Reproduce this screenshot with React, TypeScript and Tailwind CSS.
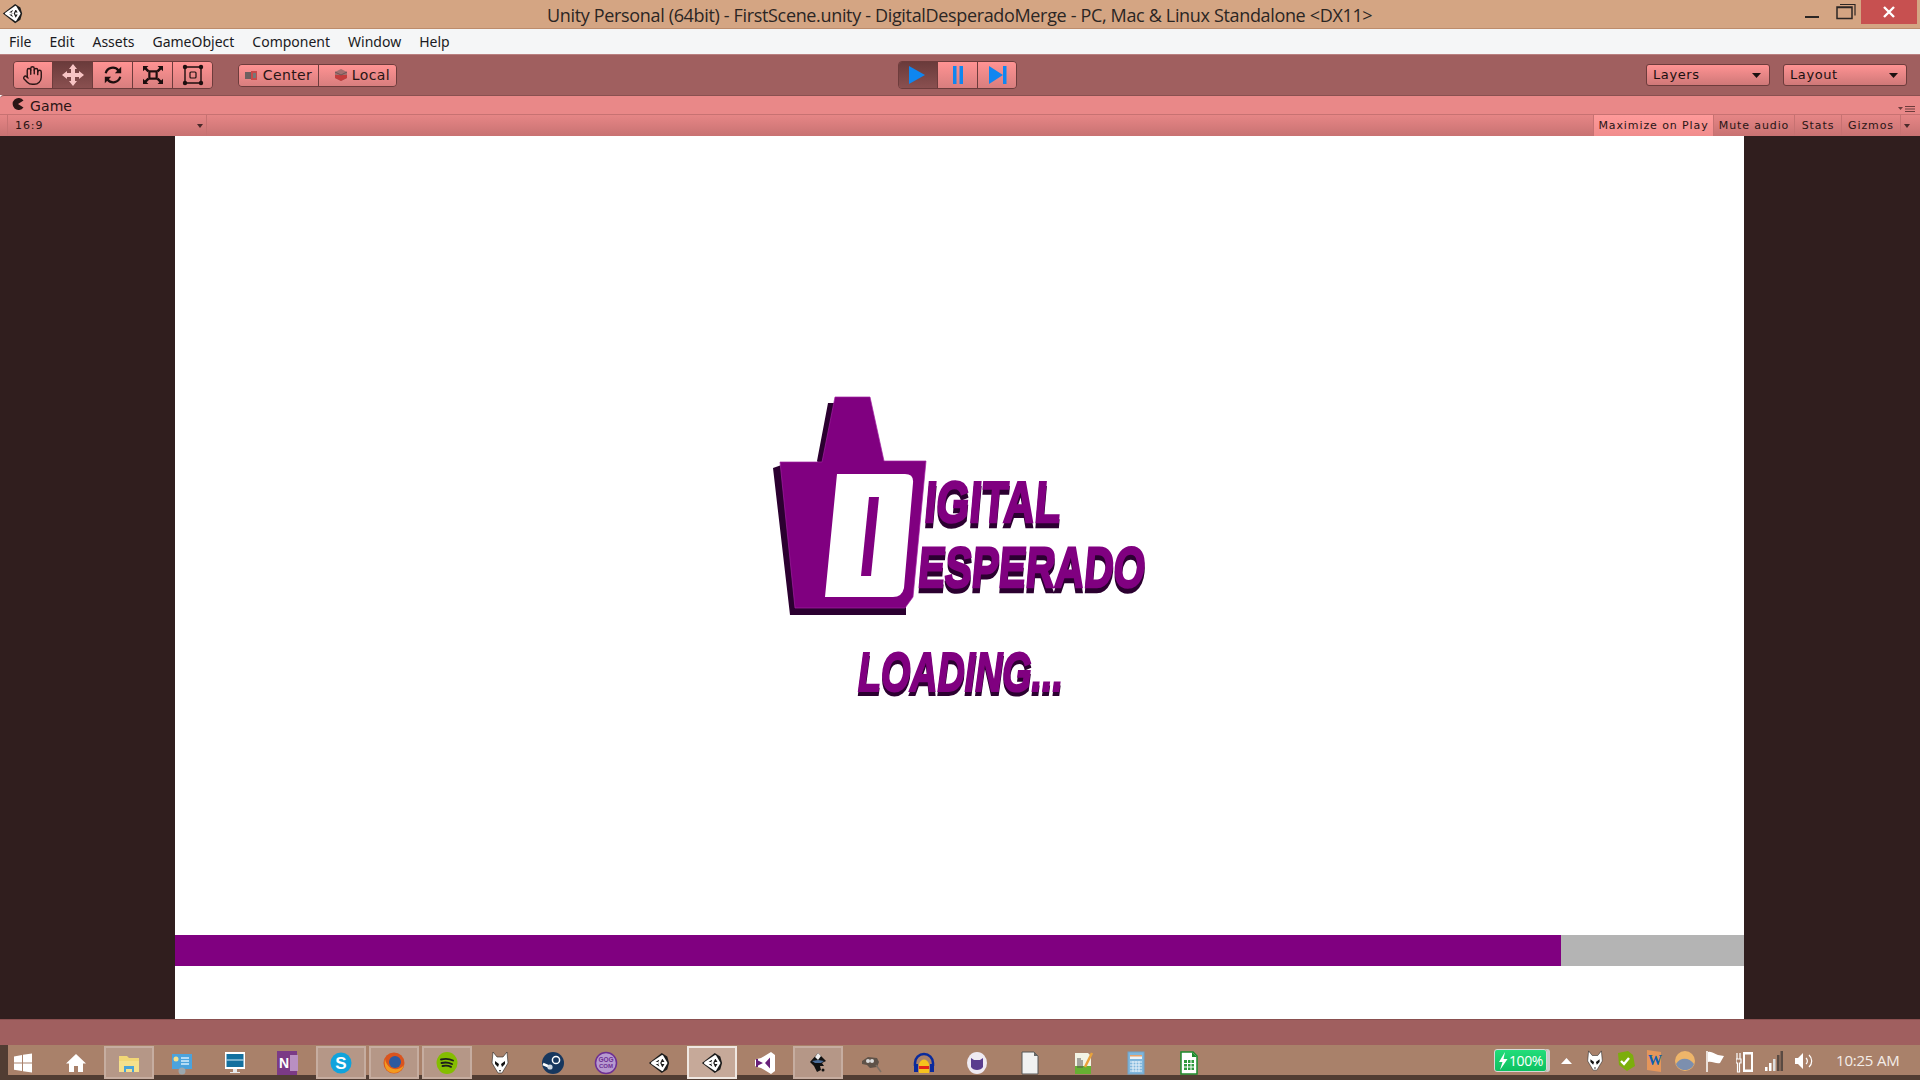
import React from "react";
import { Hand } from "lucide-react";

const Unity = ({ s = 22 }: { s?: number }) => (
  <svg width={s} height={s} viewBox="0 0 24 24">
    <path d="M1 12 15 1 21 5 23 12 21 19 15 23Z" fill="#1c1c1c" />
    <path d="M4.500 12 15.500 4.500 20 12 15.500 19.500ZM4.500 12H11M15.500 4.500 12 12M15.500 19.500 12 12M20 12H15" fill="none" stroke="#fff" strokeWidth="2.400" strokeLinejoin="round" />
  </svg>
);

const Seg = ({ active, w = "w-[40px]", children }: { active?: boolean; w?: string; children: React.ReactNode }) => (
  <div className={`${w} shrink-0 h-full flex items-center justify-center border-r last:border-r-0 border-[#6d3c3c] ${active ? "bg-gradient-to-b from-[#6a3b3b] to-[#8a5050]" : "bg-gradient-to-b from-[#ff9393] to-[#d87e7e]"}`}>
    {children}
  </div>
);

const Drop = ({ label }: { label: string }) => (
  <div className="w-[124px] h-[22px] rounded-[3px] border border-[#6d3c3c] bg-gradient-to-b from-[#ff9393] to-[#cf7878] flex items-center justify-between pl-[6px] pr-[8px] text-[13px] tracking-[0.6px] text-[#1c1010]">
    <span>{label}</span>
    <svg width="9" height="5" viewBox="0 0 9 5"><path d="M0 0h9L4.500 5Z" fill="#1c1010" /></svg>
  </div>
);

const GBtn = ({ w, active, children }: { w: string; active?: boolean; children: React.ReactNode }) => (
  <div className={`${w} h-full border-l border-[#c77272] pt-[1px] flex items-center justify-center ${active ? "bg-gradient-to-b from-[#ff9a9a] to-[#f08c8c]" : ""}`}>{children}</div>
);

const Tile = ({ on, strong, children }: { on?: boolean; strong?: boolean; children?: React.ReactNode }) => (
  <div className={`w-[50px] h-[33px] shrink-0 flex items-center justify-center border-2 ${strong ? "border-[#f0e8e2] bg-[#c6a999]" : on ? "border-[#c6ada0] bg-[#b59787]" : "border-transparent"}`}>
    {children}
  </div>
);

const I = ({ children, w = 24, h = 24 }: { children: React.ReactNode; w?: number; h?: number }) => (
  <svg width={w} height={h} viewBox={`0 0 ${w} ${h}`}>{children}</svg>
);

const Fox = ({ s = 24 }: { s?: number }) => (
  <svg width={s} height={s} viewBox="0 0 24 24">
    <path d="M5 1 9 6h6l4-5 1 11-6 10h-4L4 12Z" fill="#fff" stroke="#222" strokeWidth=".6" />
    <path d="M7 10l4 3-1 3-3-3ZM17 10l-4 3 1 3 3-3Z" fill="#111" />
    <path d="M11 19h2l-1 2Z" fill="#111" />
  </svg>
);

const taskIcons: React.ReactNode[] = [
  <I key="a"><path d="M3 5.500 11 4v7.500H3ZM12 3.800 21 2.500v9h-9ZM3 12.500h8V20l-8-1.200ZM12 12.500h9v9l-9-1.300Z" fill="#fff" /></I>,
  <I key="b"><path d="M12 3 22 12.500h-3V21h-5v-6h-4v6H5v-8.500H2Z" fill="#fff" /></I>,
  <I key="c"><path d="M2 5h8l2 2h10v6H2Z" fill="#f2d776" /><path d="M2 10h20v11H2Z" fill="#f5e08c" /><path d="M7 15h10v6h-2v-3H9v3H7Z" fill="#4aa3d8" /></I>,
  <I key="d"><rect x="2" y="3" width="20" height="15" fill="#4ba3dc" /><circle cx="6" cy="8" r="2.500" fill="#f6e08a" /><path d="M11 7h8M11 10h8M11 13h8" stroke="#d8eefa" strokeWidth="1.600" /><circle cx="12" cy="20" r="3.500" fill="#9aa7ae" /></I>,
  <I key="e"><rect x="2" y="1" width="20" height="17" fill="#fff" /><rect x="3.500" y="3" width="17" height="13" fill="#13709f" /><path d="M3.500 9h17" stroke="#d8eefa" /><path d="M10 18h4v3h3v1H7v-1h3Z" fill="#e7eaec" /></I>,
  <I key="f"><rect x="1" y="0" width="20" height="24" fill="#7b3a86" /><rect x="14" y="4" width="8" height="16" fill="#b98fc2" /><text x="3" y="17" fontSize="14" fontWeight="700" fill="#fff" fontFamily="Liberation Sans">N</text></I>,
  <I key="g"><circle cx="12" cy="12" r="10.500" fill="#10a3dc" /><text x="12" y="18" fontSize="17" fontWeight="700" fill="#fff" textAnchor="middle" fontFamily="Liberation Sans">S</text></I>,
  <I key="h"><circle cx="12" cy="12" r="10.500" fill="#d9541e" /><circle cx="13" cy="11" r="6" fill="#2c5aa0" /><path d="M3 8c2 10 12 14 19 6-2 8-11 10-16 6C3 18 2 12 3 8Z" fill="#f39a1e" /></I>,
  <I key="i"><ellipse cx="12" cy="12" rx="10.500" ry="11" fill="#84bd00" /><path d="M6 8.500c4-1 8-1 12 1M6.500 12c3.500-1 7-.7 10.500 1M7.500 15c3-.7 6-.5 8.500 .8" fill="none" stroke="#1d1d1d" strokeWidth="1.900" strokeLinecap="round" /></I>,
  <Fox key="j" />,
  <I key="k"><circle cx="12" cy="12" r="11" fill="#17375e" /><circle cx="15" cy="9" r="3.600" fill="none" stroke="#fff" strokeWidth="1.500" /><path d="M2 13 9 16" stroke="#fff" strokeWidth="2.500" /><circle cx="9" cy="16" r="2.600" fill="#cfd8e2" /></I>,
  <I key="l"><circle cx="12" cy="12" r="10.500" fill="#b79ad0" stroke="#6d2f93" strokeWidth="1.500" /><text x="12" y="11" fontSize="6.500" fontWeight="700" fill="#6d2f93" textAnchor="middle" fontFamily="Liberation Sans">GOG</text><text x="12" y="17" fontSize="6" fontWeight="700" fill="#6d2f93" textAnchor="middle" fontFamily="Liberation Sans">COM</text></I>,
  <Unity key="m" />,
  <Unity key="n" />,
  <I key="o"><path d="M4 8 8 7 18 1 22 4V20L18 23 8 17 4 16 2 15V9Z" fill="#fff" /><path d="M5 9.500 10 12 5 14.500ZM17 6.500V17.500L12 12Z" fill="#68217a" /><path d="M4 8v8" stroke="#68217a" strokeWidth="2" /></I>,
  <I key="p"><path d="M12 2 20 10 16 12 18 15H14L15 19 11 21 8 15 4 11Z" fill="#111" /><path d="M12 2 15 5 12 9 9 6Z" fill="#eee" /><path d="M6 10 12 9 18 10 15 12H9Z" fill="#4c6d98" /><circle cx="17" cy="19" r="1.500" fill="#111" /></I>,
  <I key="q"><path d="M3 10 9 6l9 1 2 4-2 5-7 1-3-3-5-1Z" fill="#5f5248" /><circle cx="9" cy="10" r="2" fill="#ddd" /><circle cx="13" cy="10" r="2" fill="#ddd" /><path d="M17 14 22 21" stroke="#7c6f64" strokeWidth="1.500" /></I>,
  <I key="r"><path d="M3 15V12a9 9 0 0 1 18 0v3" fill="none" stroke="#0a2a9c" strokeWidth="2.500" /><rect x="2" y="13" width="4" height="8" fill="#0a2a9c" /><rect x="18" y="13" width="4" height="8" fill="#0a2a9c" /><path d="M7 22V13c2-6 8-6 10 0v9Z" fill="#f6c21d" /><path d="M7 15h10v3H7Z" fill="#e52617" /></I>,
  <I key="s"><ellipse cx="12" cy="12" rx="10" ry="11" fill="#efeaf2" /><path d="M6 7 9 9h6l3-2v9c-2 4-10 4-12 0Z" fill="#5a3d8e" /></I>,
  <I key="t"><path d="M4 1H16L20 5V23H4Z" fill="#f1f1f1" stroke="#555" /><path d="M16 1 20 5H16Z" fill="#666" /></I>,
  <I key="u"><path d="M4 2H17L20 5V23H4Z" fill="#f3f3e4" /><path d="M4 15H20V23H4Z" fill="#66b032" /><path d="M7 7v10M9 7v10M11 9v8" stroke="#555" /><path d="M14 16 21 2" stroke="#e9a23b" strokeWidth="2.500" /></I>,
  <I key="v"><rect x="4" y="1" width="16" height="22" fill="#80b6dc" stroke="#6fa3c9" /><rect x="6" y="4" width="12" height="4" fill="#eaf3fa" /><rect x="6" y="4" width="12" height="1.500" fill="#e8a36b" /><path d="M6 11h12M6 14h12M6 17h12M6 20h12M9 10v11M12 10v11M15 10v11" stroke="#e7f2fa" /></I>,
  <I key="w"><path d="M4 1H16L20 5V23H4Z" fill="#fff" stroke="#1c8a2c" strokeWidth="1.500" /><path d="M15 1 20 6H15Z" fill="#1c8a2c" /><path d="M7 9h10v10H7Z" fill="#2f9b3d" /><path d="M7 12.500h10M7 16h10M10.500 9v10M14 9v10" stroke="#fff" /></I>,
];

const on = [2, 6, 7, 8, 15];
const strong = [13];

export default function App() {
  return (
    <div className="w-[1920px] h-[1080px] overflow-hidden flex flex-col font-['Liberation_Sans',sans-serif]">
      {/* title bar */}
      <div className="h-[29px] shrink-0 bg-[#d4a583] border-b border-[#bd8c6c] flex items-start">
        <div className="w-[24px] h-[28px] pl-[2px] pt-[3px] shrink-0"><Unity s={21} /></div>
        <div className="flex-1 h-[28px] flex items-center pt-[2px] pl-[523px] text-[18px] text-[#2b2624] font-['Open_Sans',sans-serif] whitespace-nowrap tracking-[-0.34px]">
          Unity Personal (64bit) - FirstScene.unity - DigitalDesperadoMerge - PC, Mac &amp; Linux Standalone &lt;DX11&gt;
        </div>
        <div className="h-[24px] flex items-start shrink-0 mr-[3px]">
          <svg width="56" height="24" viewBox="0 0 56 24">
            <path d="M0 17h14" stroke="#2b2624" strokeWidth="2" />
            <path d="M32 7h15v11.500H32Z M32 7.500h15" fill="none" stroke="#2b2624" strokeWidth="1.500" />
            <path d="M35 4.500h15v11" fill="none" stroke="#2b2624" strokeWidth="1.200" />
          </svg>
          <div className="w-[56px] h-[24px] bg-[#c75050] flex items-center justify-center">
            <svg width="12" height="12" viewBox="0 0 12 12"><path d="M1 1 11 11M11 1 1 11" stroke="#fff" strokeWidth="2.400" /></svg>
          </div>
        </div>
      </div>
      {/* menu bar */}
      <div className="h-[25px] shrink-0 bg-[#f5f6f7] flex items-center pl-[9px] gap-[18px] text-[14px] text-[#1a1a22] font-['Noto_Sans',sans-serif]">
        {["File", "Edit", "Assets", "GameObject", "Component", "Window", "Help"].map((m) => (
          <span key={m}>{m}</span>
        ))}
      </div>
      {/* toolbar */}
      <div className="h-[41px] shrink-0 bg-[#a05f5f] flex items-center pl-[13px] pr-[13px] border-t border-[#b98080] font-['DejaVu_Sans',sans-serif]">
        <div className="flex h-[28px] rounded-[4px] overflow-hidden border border-[#6d3c3c]">
          <Seg w="w-[39px]"><Hand size={21} strokeWidth={1.6} color="#2a1515" className="mr-[2px]" /></Seg>
          <Seg active>
            <svg width="24" height="24" viewBox="0 0 24 24"><path d="M12 1 16 6H14V10H18V8L23 12 18 16V14H14V18H16L12 23 8 18H10V14H6V16L1 12 6 8V10H10V6H8Z" fill="#f7c4c4" /></svg>
          </Seg>
          <Seg>
            <svg width="20" height="20" viewBox="0 0 22 22"><path d="M3 9a8 8 0 0 1 14-3M19 13a8 8 0 0 1-14 3" fill="none" stroke="#1c0e0e" strokeWidth="2.500" /><path d="M20 2v7h-7ZM2 20v-7h7Z" fill="#1c0e0e" /></svg>
          </Seg>
          <Seg>
            <svg width="22" height="20" viewBox="0 0 24 22"><rect x="8" y="7" width="8" height="8" fill="none" stroke="#1c0e0e" strokeWidth="2.400" /><path d="M1 1h6L5 3l3 3-2 2-3-3-2 2ZM23 1h-6l2 2-3 3 2 2 3-3 2 2ZM1 21h6l-2-2 3-3-2-2-3 3-2-2ZM23 21h-6l2-2-3-3 2-2 3 3 2-2Z" fill="#1c0e0e" /></svg>
          </Seg>
          <Seg w="w-[39px]">
            <svg width="22" height="22" viewBox="0 0 22 22"><path d="M3 3H19V19H3Z" fill="none" stroke="#1c0e0e" strokeWidth="1.400" /><circle cx="3" cy="3" r="2.200" fill="#1c0e0e" /><circle cx="19" cy="3" r="2.200" fill="#1c0e0e" /><circle cx="3" cy="19" r="2.200" fill="#1c0e0e" /><circle cx="19" cy="19" r="2.200" fill="#1c0e0e" /><rect x="8" y="8" width="6" height="6" rx="1" fill="none" stroke="#1c0e0e" strokeWidth="1.200" /></svg>
          </Seg>
        </div>
        <div className="ml-[25px] flex h-[23px] rounded-[4px] overflow-hidden border border-[#6d3c3c] text-[14px] tracking-[0.4px] text-[#2a1515]">
          <Seg w="w-[80px]">
            <span className="flex items-center gap-[5px]">
              <svg width="13" height="9" viewBox="0 0 13 9"><rect x="0" y="1" width="6" height="7" fill="#6d6060" /><rect x="6" y="0" width="6" height="9" fill="#c74a4a" /><rect x="8" y="2" width="3" height="5" fill="#777" /></svg>
              Center
            </span>
          </Seg>
          <Seg w="w-[77px]">
            <span className="flex items-center gap-[4px] pl-[9px]">
              <svg width="14" height="14" viewBox="0 0 14 14"><path d="M7 1 13 4V10L7 13 1 10V4Z" fill="#a27070" /><path d="M7 7V13L1 10V7ZM7 7H13V10L7 13Z" fill="#c43d3d" /><path d="M1 4 7 7 13 4" fill="none" stroke="#6d5656" /></svg>
              Local
            </span>
          </Seg>
        </div>
        <div className="ml-[501px] flex h-[28px] rounded-[4px] overflow-hidden border border-[#6d3c3c]">
          <Seg active w="w-[39px]"><svg width="18" height="20" viewBox="0 0 18 20" className="mr-[2px]"><path d="M1 1 17 10 1 19Z" fill="#0f86f0" /></svg></Seg>
          <Seg><svg width="14" height="18" viewBox="0 0 14 18"><rect x="2" y="0" width="3.500" height="18" fill="#0f86f0" /><rect x="8.500" y="0" width="3.500" height="18" fill="#0f86f0" /></svg></Seg>
          <Seg w="w-[38px]"><svg width="20" height="18" viewBox="0 0 20 18" className="ml-[2px]"><path d="M1 0 15 9 1 18Z" fill="#0f86f0" /><rect x="15" y="0" width="3.500" height="18" fill="#0f86f0" /></svg></Seg>
        </div>
        <div className="ml-auto flex gap-[13px]">
          <Drop label="Layers" />
          <Drop label="Layout" />
        </div>
      </div>
      {/* game tab */}
      <div className="h-[19px] shrink-0 bg-[#e98888] border-t border-[#8a5050] rounded-tl-[4px] flex items-center pl-[12px] text-[14px] text-[#2a1515] font-['DejaVu_Sans',sans-serif] tracking-[0.1px]">
        <svg width="12" height="12" viewBox="0 0 12 12" className="mr-[6px] mb-[3px]"><path d="M6 6 11.500 2.500A6 6 0 1 0 11.500 9.500Z" fill="#2a1515" /></svg>
        <span className="mt-[3px]">Game</span>
        <svg width="17" height="7" viewBox="0 0 17 7" className="ml-auto mr-[5px] mt-[9px]"><path d="M0 1h5L2.500 4Z" fill="#6d3c3c" /><path d="M7 .5h10M7 3h10M7 5.500h10" stroke="#6d3c3c" /></svg>
      </div>
      {/* game toolbar */}
      <div className="h-[22px] shrink-0 bg-gradient-to-b from-[#e68686] to-[#c87272] border-t border-[#c77272] flex items-stretch text-[11px] tracking-[0.9px] text-[#2a1515] font-['DejaVu_Sans',sans-serif]">
        <div className="ml-[7px] w-[200px] border-x border-[#c77272] pl-[7px] pr-[3px] pt-[1px] flex items-center justify-between">
          <span>16:9</span>
          <svg width="6" height="4" viewBox="0 0 6 4"><path d="M0 0h6L3 4Z" fill="#4a2a2a" /></svg>
        </div>
        <div className="ml-auto flex mr-[8px]">
          <GBtn w="w-[120px]" active>Maximize on Play</GBtn>
          <GBtn w="w-[81px]">Mute audio</GBtn>
          <GBtn w="w-[47px]">Stats</GBtn>
          <GBtn w="w-[59px]">Gizmos</GBtn>
          <GBtn w="w-[12px]"><svg width="6" height="4" viewBox="0 0 6 4"><path d="M0 0h6L3 4Z" fill="#4a2a2a" /></svg></GBtn>
        </div>
      </div>
      {/* game view */}
      <div className="h-[883px] shrink-0 flex bg-[#301e1e]">
        <div className="w-[175px] shrink-0" />
        <div className="w-[1569px] shrink-0 bg-white flex flex-col">
          <svg width="390" height="310" viewBox="770 390 390 310" className="ml-[595px] mt-[254px] overflow-visible">
            <path d="M828 403H850V462H790L773 468 790 615H906V600L817 461Z" fill="#2b0030" />
            <path d="M835 397H870L884 461H926L913 597 905 608H795L780 462H822Z" fill="#800080" stroke="#a020a0" strokeWidth=".7" />
            <path d="M837 474H905Q914 474 913 483L904 588Q902 597 893 597H825Z" fill="#fff" />
            <path d="M869 497H879L871 576H861Z" fill="#800080" />
            <g className="drop-shadow-[0_5px_0_#2b0030]" fontFamily="Liberation Sans" fontWeight="700" fill="#800080" stroke="#800080" strokeWidth="2.400">
              <text x="969" y="522" fontSize="58" textLength="136" lengthAdjust="spacingAndGlyphs" transform="skewX(-5)">IGITAL</text>
              <text x="968" y="587" fontSize="57" textLength="227" lengthAdjust="spacingAndGlyphs" transform="skewX(-5)">ESPERADO</text>
            </g>
            <g className="drop-shadow-[0_4px_0_#2b0030]" fontFamily="Liberation Sans" fontWeight="700" fontStyle="italic" fill="#800080" stroke="#800080" strokeWidth="2.200">
              <text x="858" y="691" fontSize="56" textLength="205" lengthAdjust="spacingAndGlyphs">LOADING...</text>
            </g>
          </svg>
          <div className="mt-auto mb-[53px] h-[31px] flex bg-[#b4b4b4]">
            <div className="w-[1386px] bg-[#800080]" />
          </div>
        </div>
      </div>
      {/* status bar */}
      <div className="h-[26px] shrink-0 bg-[#a05f5f] border-t border-[#8a5050]" />
      {/* taskbar */}
      <div className="flex-1 bg-[#a9816a] shadow-[inset_8px_-5px_0_#513d33] flex items-start pt-[1px] gap-[3px] text-white font-['Open_Sans',sans-serif]">
        <div className="flex gap-[3px] -ml-[2px]">
          {taskIcons.map((ic, i) => (
            <Tile key={i} on={on.includes(i)} strong={strong.includes(i)}>{ic}</Tile>
          ))}
        </div>
        <div className="ml-auto mr-[12px] h-[29px] flex items-center">
          <div className="w-[53px] h-[23px] rounded-[3px] bg-gradient-to-b from-[#22dd7a] to-[#0cc060] border border-[#d8d8d8] flex items-center justify-center gap-[1px] text-[14px] tracking-[-0.4px] mr-[7px] shadow-[3px_0_0_#ccc]">
            <svg width="10" height="18" viewBox="0 0 10 18"><path d="M7 0 1 10H4.500L2 18 9.500 7H5.500Z" fill="#fff" /></svg>
            100%
          </div>
          <div className="w-[24px] flex justify-center"><svg width="11" height="6" viewBox="0 0 11 6"><path d="M5.500 0 11 6H0Z" fill="#fff" /></svg></div>
          <div className="w-[33px] flex justify-center"><Fox s={22} /></div>
          <div className="w-[28px] flex justify-center"><svg width="22" height="22" viewBox="0 0 22 22"><path d="M4 3 14 1 19 5 21 16 13 21 5 15Z" fill="#7cae0c" /><path d="M7 11 10 14 15 8" fill="none" stroke="#fff" strokeWidth="2.400" /></svg></div>
          <div className="w-[31px] flex justify-center"><svg width="20" height="24" viewBox="0 0 20 24"><path d="M2 1 16 3V23L2 21Z" fill="#e5965a" /><text x="3" y="16" fontSize="14" fontWeight="700" fill="#0f5fb0" fontFamily="Liberation Serif">W</text></svg></div>
          <div className="w-[30px] flex justify-center"><svg width="22" height="22" viewBox="0 0 22 22"><circle cx="11" cy="11" r="10" fill="#eeb56a" /><path d="M2 14C6 7 15 7 20 14 17 22 5 22 2 14Z" fill="#7c8fae" /></svg></div>
          <div className="w-[30px] flex justify-center"><svg width="20" height="22" viewBox="0 0 20 22"><path d="M2 1V22" stroke="#fff" strokeWidth="1.500" /><path d="M3 2C7 1 9 4 13 5L19 6 15 13C11 14 7 11 3 12Z" fill="#fff" /></svg></div>
          <div className="w-[30px] flex justify-center"><svg width="18" height="24" viewBox="0 0 18 24"><path d="M1 4V10M4 4V10M0 10H5V14H3.500V23H1.500V14H0Z" fill="none" stroke="#fff" strokeWidth="1.200" /><rect x="7" y="3" width="10" height="20" fill="#fff" /><rect x="9" y="5.500" width="6" height="15" fill="#a9816a" /></svg></div>
          <div className="w-[28px] flex justify-center"><svg width="18" height="20" viewBox="0 0 18 20"><rect x="0" y="16" width="2.500" height="4" fill="#fff" /><rect x="4" y="12" width="2.500" height="8" fill="#fff" /><rect x="8" y="8" width="2.500" height="12" fill="#ddd" /><rect x="12" y="4" width="2.500" height="16" fill="#5a4a42" /><rect x="15.500" y="0" width="2.500" height="20" fill="#5a4a42" /></svg></div>
          <div className="w-[32px] flex justify-center"><svg width="20" height="20" viewBox="0 0 20 20"><path d="M1 7H4L9 2V18L4 13H1Z" fill="#fff" /><path d="M12 7a4 4 0 0 1 0 6M15 4a8 8 0 0 1 0 12" fill="none" stroke="#fff" strokeWidth="1.200" /></svg></div>
          <div className="w-[88px] pl-[16px] text-[15px] tracking-[-0.2px] whitespace-nowrap text-[#f4ede8]">10:25 AM</div>
        </div>
      </div>
    </div>
  );
}
